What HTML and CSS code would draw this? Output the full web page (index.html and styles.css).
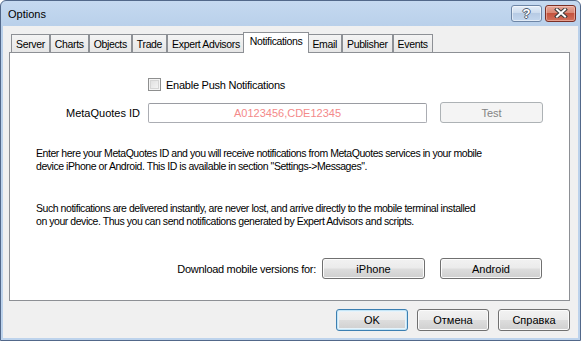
FILE: index.html
```html
<!DOCTYPE html>
<html>
<head>
<meta charset="utf-8">
<title>Options</title>
<link rel="stylesheet" href="styles.css">
</head>
<body>
<div class="window">
  <div class="titlebar">
    <div class="title">Options</div>
    <div class="capbtn help"><span class="qmark">?</span></div>
    <div class="capbtn close">
      <svg width="14" height="10" viewBox="0 0 14 10"><path d="M3 1.5 L11 8.5 M11 1.5 L3 8.5" stroke="#3b3b3b" stroke-width="4" stroke-linecap="square" fill="none"/><path d="M3 1.5 L11 8.5 M11 1.5 L3 8.5" stroke="#ffffff" stroke-width="2" stroke-linecap="square" fill="none"/></svg>
    </div>
  </div>
  <div class="client">
    <div class="tabs">
      <div class="tab">Server</div>
      <div class="tab">Charts</div>
      <div class="tab">Objects</div>
      <div class="tab">Trade</div>
      <div class="tab">Expert Advisors</div>
      <div class="tab active">Notifications</div>
      <div class="tab">Email</div>
      <div class="tab">Publisher</div>
      <div class="tab">Events</div>
    </div>
    <div class="panel">
      <div class="row-check">
        <span class="checkbox"></span>
        <span class="check-label">Enable Push Notifications</span>
      </div>
      <div class="row-id">
        <span class="id-label">MetaQuotes ID</span>
        <div class="input">A0123456,CDE12345</div>
        <div class="btn disabled test">Test</div>
      </div>
      <p class="para first">Enter here your MetaQuotes ID and you will receive notifications from MetaQuotes services in your mobile<br>device iPhone or Android. This ID is available in section "Settings-&gt;Messages".</p>
      <p class="para second">Such notifications are delivered instantly, are never lost, and arrive directly to the mobile terminal installed<br>on your device. Thus you can send notifications generated by Expert Advisors and scripts.</p>
      <div class="row-dl">
        <span class="dl-label">Download mobile versions for:</span>
        <div class="btn dl">iPhone</div>
        <div class="btn dl android">Android</div>
      </div>
    </div>
    <div class="footer">
      <div class="btn foot default">OK</div>
      <div class="btn foot">Отмена</div>
      <div class="btn foot">Справка</div>
    </div>
  </div>
</div>
</body>
</html>
```
FILE: styles.css
```css
* { box-sizing: border-box; }
html, body { margin: 0; padding: 0; }
body {
  width: 581px;
  height: 341px;
  overflow: hidden;
  background: #ffffff;
  font-family: "Liberation Sans", Arial, sans-serif;
  font-size: 11px;
  color: #000;
}
.window {
  width: 581px;
  height: 341px;
  border: 1px solid #52688a;
  border-radius: 6px 6px 0 0;
  background: linear-gradient(#c5d9f0, #b9d0ea 26px, #bdd3ec);
  display: flex;
  flex-direction: column;
}
.titlebar {
  height: 25px;
  flex: none;
  display: flex;
  align-items: center;
  padding: 0 4px 0 7px;
}
.title {
  flex: 1;
  font-size: 11px;
  padding-top: 1px;
}
.capbtn {
  width: 31px;
  height: 17px;
  border-radius: 3px;
  display: flex;
  align-items: center;
  justify-content: center;
  margin-top: -1px;
}
.help {
  margin-right: 3px;
  border: 1px solid #6e86a6;
  background: linear-gradient(#e6eef8 0%, #cddcee 45%, #b7cbe4 50%, #c4d7ee 100%);
  box-shadow: inset 0 0 0 1px rgba(255,255,255,0.5);
}
.qmark {
  font-weight: bold;
  font-size: 13px;
  color: #fff;
  line-height: 13px;
  text-shadow: -1px 0 #4f5d70, 1px 0 #4f5d70, 0 -1px #4f5d70, 0 1px #4f5d70;
}
.close {
  border: 1px solid #7b3026;
  background: linear-gradient(#e6a89c 0%, #d98874 45%, #c4533e 50%, #d2715c 100%);
  box-shadow: inset 0 0 0 1px rgba(255,220,210,0.45);
}
.close svg { display: block; }
.client {
  flex: 1;
  margin: 0 2px 2px 2px;
  background: #f0f0f0;
  display: flex;
  flex-direction: column;
  padding: 6px 8px 0 6px;
}
.tabs {
  height: 20px;
  flex: none;
  display: flex;
  align-items: flex-end;
  padding-left: 2px;
  position: relative;
  z-index: 1;
}
.tab {
  height: 18px;
  padding: 2px 4px 0 4px;
  border: 1px solid #8d9095;
  border-bottom: none;
  background: linear-gradient(#f4f4f4, #e6e6e6);
  white-space: nowrap;
  line-height: 14px;
  font-size: 10.5px;
  letter-spacing: -0.35px;
}
.tab.active {
  height: 21px;
  margin: 0 -2px -1px -2px;
  padding: 1px 6px 0 6px;
  background: #ffffff;
  position: relative;
  z-index: 2;
}
.panel {
  height: 249px;
  flex: none;
  background: #ffffff;
  border: 1px solid #8d9095;
  display: flex;
  flex-direction: column;
}
.row-check {
  margin-top: 25px;
  padding-left: 138px;
  display: flex;
  align-items: center;
  height: 13px;
}
.checkbox {
  width: 13px;
  height: 13px;
  border: 1px solid #8e8f8f;
  background: linear-gradient(135deg, #dcdcdc, #f8f8f8);
  box-shadow: inset 0 0 0 1px #f4f4f4, inset 0 0 0 2px #d5d5d5;
  margin-right: 5px;
}
.check-label { letter-spacing: -0.25px; }
.row-id {
  margin-top: 11px;
  height: 21px;
  display: flex;
  align-items: center;
}
.id-label {
  width: 130px;
  text-align: right;
  margin-right: 8px;
}
.input {
  width: 279px;
  height: 20px;
  border: 1px solid #abadb3;
  border-top-color: #9a9ca2;
  border-radius: 2px;
  background: #fff;
  color: #f48a8a;
  text-align: center;
  line-height: 18px;
  margin-right: 13px;
}
.btn {
  height: 21px;
  border: 1px solid #707070;
  border-radius: 3px;
  background: linear-gradient(#f2f2f2 0%, #ebebeb 48%, #dddddd 52%, #cfcfcf 100%);
  box-shadow: inset 0 0 0 1px #fbfbfb;
  display: flex;
  align-items: center;
  justify-content: center;
  font-size: 11px;
  white-space: nowrap;
}
.btn.disabled {
  border-color: #adb2b5;
  background: #f4f4f4;
  box-shadow: none;
  color: #838383;
}
.test { width: 103px; }
.para {
  margin: 24px 0 0 26px;
  line-height: 13px;
  white-space: nowrap;
  font-size: 10.5px;
  letter-spacing: -0.45px;
}
.para.second { margin-top: 29px; }
.row-dl {
  margin-top: 30px;
  display: flex;
  align-items: center;
  justify-content: flex-end;
  padding-right: 27px;
}
.dl-label { margin-right: 6px; letter-spacing: -0.3px; }
.dl { width: 103px; }
.dl.android { margin-left: 15px; width: 102px; }
.footer {
  margin-top: 8px;
  display: flex;
  justify-content: flex-end;
  gap: 9px;
}
.foot { width: 72px; height: 22px; }
.foot.default {
  border-color: #3c7fb1;
  box-shadow: inset 0 0 0 1px #c4e5f6, inset 0 0 0 2px #e6f3fb;
}
```
